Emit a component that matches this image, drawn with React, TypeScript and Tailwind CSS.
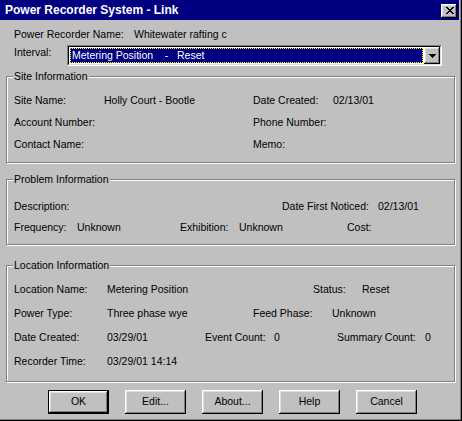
import React from "react";

const raised =
  "bg-[#c0c0c0] shadow-[inset_-1px_-1px_0_#000,inset_1px_1px_0_#fff,inset_-2px_-2px_0_#808080,inset_2px_2px_0_#dfdfdf]";

function CloseGlyph() {
  // 8x7 pixel X like the classic caption button
  const px: [number, number][] = [
    [0, 0], [1, 0], [6, 0], [7, 0],
    [1, 1], [2, 1], [5, 1], [6, 1],
    [2, 2], [3, 2], [4, 2], [5, 2],
    [3, 3], [4, 3],
    [2, 4], [3, 4], [4, 4], [5, 4],
    [1, 5], [2, 5], [5, 5], [6, 5],
    [0, 6], [1, 6], [6, 6], [7, 6],
  ];
  return (
    <svg width="8" height="7" viewBox="0 0 8 7" shapeRendering="crispEdges">
      {px.map(([x, y]) => (
        <rect key={`${x}-${y}`} x={x} y={y} width="1" height="1" fill="#000" />
      ))}
    </svg>
  );
}

function Group({
  title,
  className,
  children,
}: {
  title: string;
  className: string;
  children: React.ReactNode;
}) {
  return (
    <div
      className={`relative ml-[6px] w-[449px] border border-[#808080] pl-[7px] shadow-[inset_1px_1px_0_#fff,1px_1px_0_#fff] ${className}`}
    >
      <span className="absolute left-[6px] top-[-7px] bg-[#c0c0c0] px-[1px] leading-[13px]">
        {title}
      </span>
      {children}
    </div>
  );
}

function Cell({ w, children }: { w?: string; children: React.ReactNode }) {
  return <span className={`shrink-0 whitespace-nowrap ${w ?? ""}`}>{children}</span>;
}

function Row({ className, children }: { className?: string; children: React.ReactNode }) {
  return <div className={`flex h-[13px] items-center leading-[13px] ${className ?? ""}`}>{children}</div>;
}

function Button({ label, primary }: { label: string; primary?: boolean }) {
  return (
    <button
      className={`flex h-[24px] w-[61px] items-center justify-center ${raised} ${
        primary ? "border border-black" : ""
      }`}
    >
      {label}
    </button>
  );
}

export default function App() {
  return (
    <div className="h-[421px] w-[462px] overflow-hidden border-b border-r border-black">
      <div className="h-full w-full border-b border-r border-[#808080] bg-[#c0c0c0] pr-[1px] font-['Liberation_Sans',Arial,sans-serif] text-[10.5px] text-black">
        {/* title bar */}
        <div className="flex h-[20px] items-center justify-between bg-[#000080] pl-[5px] pr-[2px]">
          <span className="text-[12px] font-bold leading-[13px] text-white">
            Power Recorder System - Link
          </span>
          <div className={`mt-[1px] flex h-[14px] w-[16px] items-center justify-center pl-[1px] ${raised}`}>
            <CloseGlyph />
          </div>
        </div>

        {/* header */}
        <Row className="mt-[8px] pl-[14px]">
          <Cell w="w-[120px]">Power Recorder Name:</Cell>
          <Cell>Whitewater rafting c</Cell>
        </Row>
        <div className="mt-[4px] flex items-start pl-[14px]">
          <span className="mt-[1px] w-[53px] shrink-0 leading-[13px]">Interval:</span>
          <div className="h-[21px] w-[375px] border border-b-white border-l-[#808080] border-r-white border-t-[#808080]">
            <div className="flex h-full w-full border border-b-[#dfdfdf] border-l-black border-r-[#dfdfdf] border-t-black bg-white">
              <div className="m-[1px] flex flex-1 items-center border border-dotted border-[#ffff00] bg-[#000080] pl-[1px] leading-[13px] text-white whitespace-pre">
                {"Metering Position    -   Reset"}
              </div>
              <div className={`flex h-full w-[16px] shrink-0 items-center justify-center ${raised}`}>
                <svg width="7" height="4" viewBox="0 0 7 4" shapeRendering="crispEdges">
                  <path d="M0 0h7v1H0zM1 1h5v1H1zM2 2h3v1H2zM3 3h1v1H3z" fill="#000" />
                </svg>
              </div>
            </div>
          </div>
        </div>

        {/* site information */}
        <Group title="Site Information" className="mt-[10px] h-[87px] pt-[17px]">
          <Row>
            <Cell w="w-[90px]">Site Name:</Cell>
            <Cell w="w-[149px]">Holly Court - Bootle</Cell>
            <Cell w="w-[80px]">Date Created:</Cell>
            <Cell>02/13/01</Cell>
          </Row>
          <Row className="mt-[9px]">
            <Cell w="w-[239px]">Account Number:</Cell>
            <Cell>Phone Number:</Cell>
          </Row>
          <Row className="mt-[9px]">
            <Cell w="w-[239px]">Contact Name:</Cell>
            <Cell>Memo:</Cell>
          </Row>
        </Group>

        {/* problem information */}
        <Group title="Problem Information" className="mt-[16px] h-[66px] pt-[20px]">
          <Row>
            <Cell w="w-[268px]">Description:</Cell>
            <Cell w="w-[96px]">Date First Noticed:</Cell>
            <Cell>02/13/01</Cell>
          </Row>
          <Row className="mt-[8px]">
            <Cell w="w-[63px]">Frequency:</Cell>
            <Cell w="w-[103px]">Unknown</Cell>
            <Cell w="w-[59px]">Exhibition:</Cell>
            <Cell w="w-[108px]">Unknown</Cell>
            <Cell>Cost:</Cell>
          </Row>
        </Group>

        {/* location information */}
        <Group title="Location Information" className="mt-[20px] h-[117px] pt-[17px]">
          <Row>
            <Cell w="w-[93px]">Location Name:</Cell>
            <Cell w="w-[206px]">Metering Position</Cell>
            <Cell w="w-[49px]">Status:</Cell>
            <Cell>Reset</Cell>
          </Row>
          <Row className="mt-[11px]">
            <Cell w="w-[93px]">Power Type:</Cell>
            <Cell w="w-[146px]">Three phase wye</Cell>
            <Cell w="w-[79px]">Feed Phase:</Cell>
            <Cell>Unknown</Cell>
          </Row>
          <Row className="mt-[11px]">
            <Cell w="w-[93px]">Date Created:</Cell>
            <Cell w="w-[98px]">03/29/01</Cell>
            <Cell w="w-[69px]">Event Count:</Cell>
            <Cell w="w-[63px]">0</Cell>
            <Cell w="w-[88px]">Summary Count:</Cell>
            <Cell>0</Cell>
          </Row>
          <Row className="mt-[11px]">
            <Cell w="w-[93px]">Recorder Time:</Cell>
            <Cell>03/29/01 14:14</Cell>
          </Row>
        </Group>

        {/* buttons */}
        <div className="mt-[8px] flex gap-[16px] pl-[48px]">
          <Button label="OK" primary />
          <Button label="Edit..." />
          <Button label="About..." />
          <Button label="Help" />
          <Button label="Cancel" />
        </div>
      </div>
    </div>
  );
}
